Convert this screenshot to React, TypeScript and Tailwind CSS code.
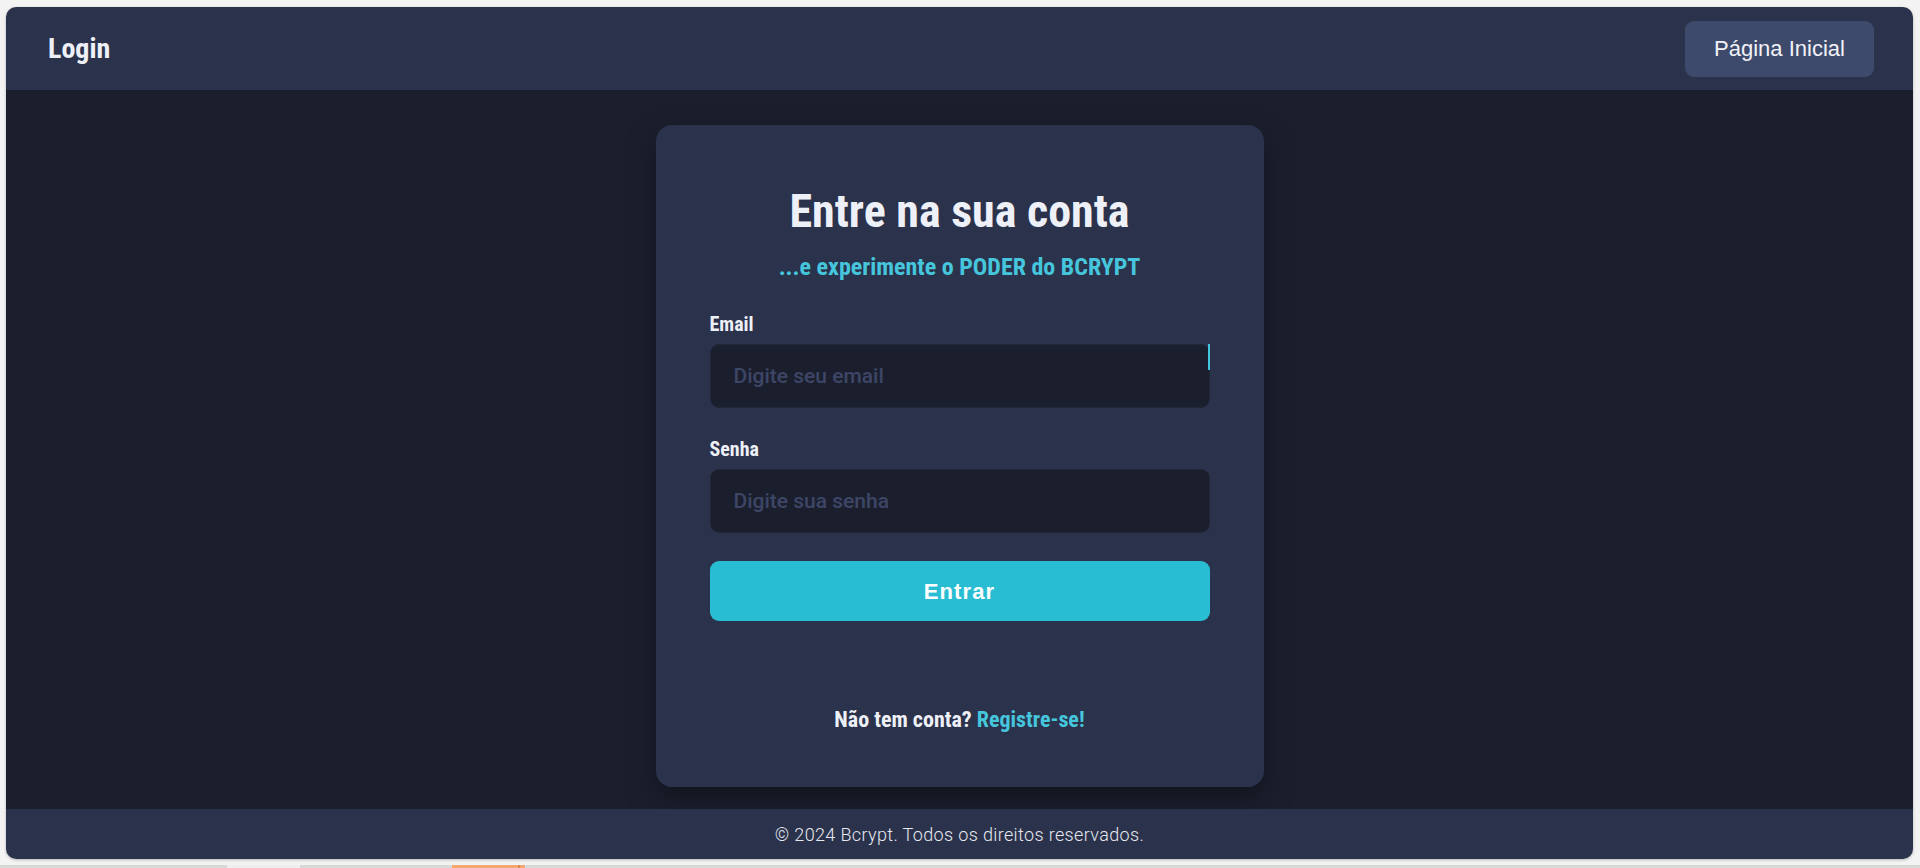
import React, { useState } from 'react';

const Field = ({
  label,
  type,
  placeholder,
  value,
  onChange,
  caret,
}: {
  label: string;
  type: string;
  placeholder: string;
  value: string;
  onChange: (v: string) => void;
  caret?: boolean;
}) => (
  <div className="flex flex-col">
    <label className="font-['Roboto_Condensed',sans-serif] text-[20px] leading-none font-bold text-[#eef0f7]">
      {label}
    </label>
    <div className="relative mt-[10px]">
      <input
        type={type}
        value={value}
        placeholder={placeholder}
        onChange={(e) => onChange(e.target.value)}
        className="w-full h-[64px] rounded-[9px] bg-[#1b1f2d] border border-[#222738] px-[23px] font-['Roboto',sans-serif] text-[21px] font-medium text-[#eef0f7] placeholder:text-[#3d4667] outline-none"
      />
      {caret && <span className="absolute right-0 top-0 w-[2px] h-[26px] bg-[#3fc6dc]" />}
    </div>
  </div>
);

export default function App() {
  const [email, setEmail] = useState('');
  const [senha, setSenha] = useState('');

  return (
    <div className="h-[868px] w-full overflow-hidden bg-[#f3f3f3] flex flex-col">
      {/* janela */}
      <div className="mt-[7px] ml-[6px] mr-[7px] h-[852px] flex flex-col rounded-[10px] overflow-hidden shadow-[0_1px_3px_rgba(0,0,0,0.25)]">
        <header className="h-[83px] shrink-0 bg-[#2b324b] flex items-center justify-between pl-[42px] pr-[39px]">
          <h1 className="font-['Roboto_Condensed',sans-serif] text-[28px] leading-none font-bold text-[#eef0f7]">
            Login
          </h1>
          <button className="w-[189px] h-[56px] rounded-[9px] bg-[#3e4a6c] font-['Liberation_Sans',Arial,sans-serif] text-[22px] text-[#f1f2f7]">
            Página Inicial
          </button>
        </header>

        <main className="flex-1 bg-[#1b1f2d] flex justify-center items-start pt-[35px]">
          <div className="w-[608px] h-[662px] rounded-[16px] bg-[#2b324b] shadow-[0_12px_30px_rgba(0,0,0,0.35)] px-[54px] pt-[63px] flex flex-col">
            <h2 className="text-center font-['Roboto_Condensed',sans-serif] text-[46px] leading-none font-bold text-[#eef0f7]">
              Entre na sua conta
            </h2>
            <p className="mt-[21px] text-center font-['Roboto_Condensed',sans-serif] text-[24px] leading-none font-bold text-[#45c6dc]">
              ...e experimente o PODER do BCRYPT
            </p>

            <form className="mt-[35px] flex flex-col" onSubmit={(e) => e.preventDefault()}>
              <Field label="Email" type="email" placeholder="Digite seu email" value={email} onChange={setEmail} caret />
              <div className="mt-[31px]">
                <Field label="Senha" type="password" placeholder="Digite sua senha" value={senha} onChange={setSenha} />
              </div>
              <button
                type="submit"
                className="mt-[28px] h-[60px] rounded-[9px] bg-[#29bdd3] font-['Liberation_Sans',Arial,sans-serif] text-[22px] font-bold tracking-[0.05em] text-white"
              >
                Entrar
              </button>
            </form>

            <p className="mt-[88px] text-center font-['Roboto_Condensed',sans-serif] text-[22px] leading-none font-bold text-[#eef0f7]">
              Não tem conta? <a href="#" className="text-[#45c6dc]">Registre-se!</a>
            </p>
          </div>
        </main>

        <footer className="h-[50px] shrink-0 bg-[#2b324b] flex items-center justify-center">
          <span className="font-['Roboto',sans-serif] text-[18px] font-light tracking-[0.02em] text-[#e6e8f0]">
            © 2024 Bcrypt. Todos os direitos reservados.
          </span>
        </footer>
      </div>

      {/* barra inferior */}
      <div className="mt-[6px] h-[3px] flex bg-[#d7d9d7]">
        <div className="w-[227px]" />
        <div className="w-[73px] bg-[#eeeeee]" />
        <div className="w-[152px]" />
        <div className="w-[66px] bg-[#f4a86f]" />
        <div className="w-[2px] bg-[#d98a55]" />
        <div className="w-[5px] bg-[#f4a86f]" />
      </div>
    </div>
  );
}
